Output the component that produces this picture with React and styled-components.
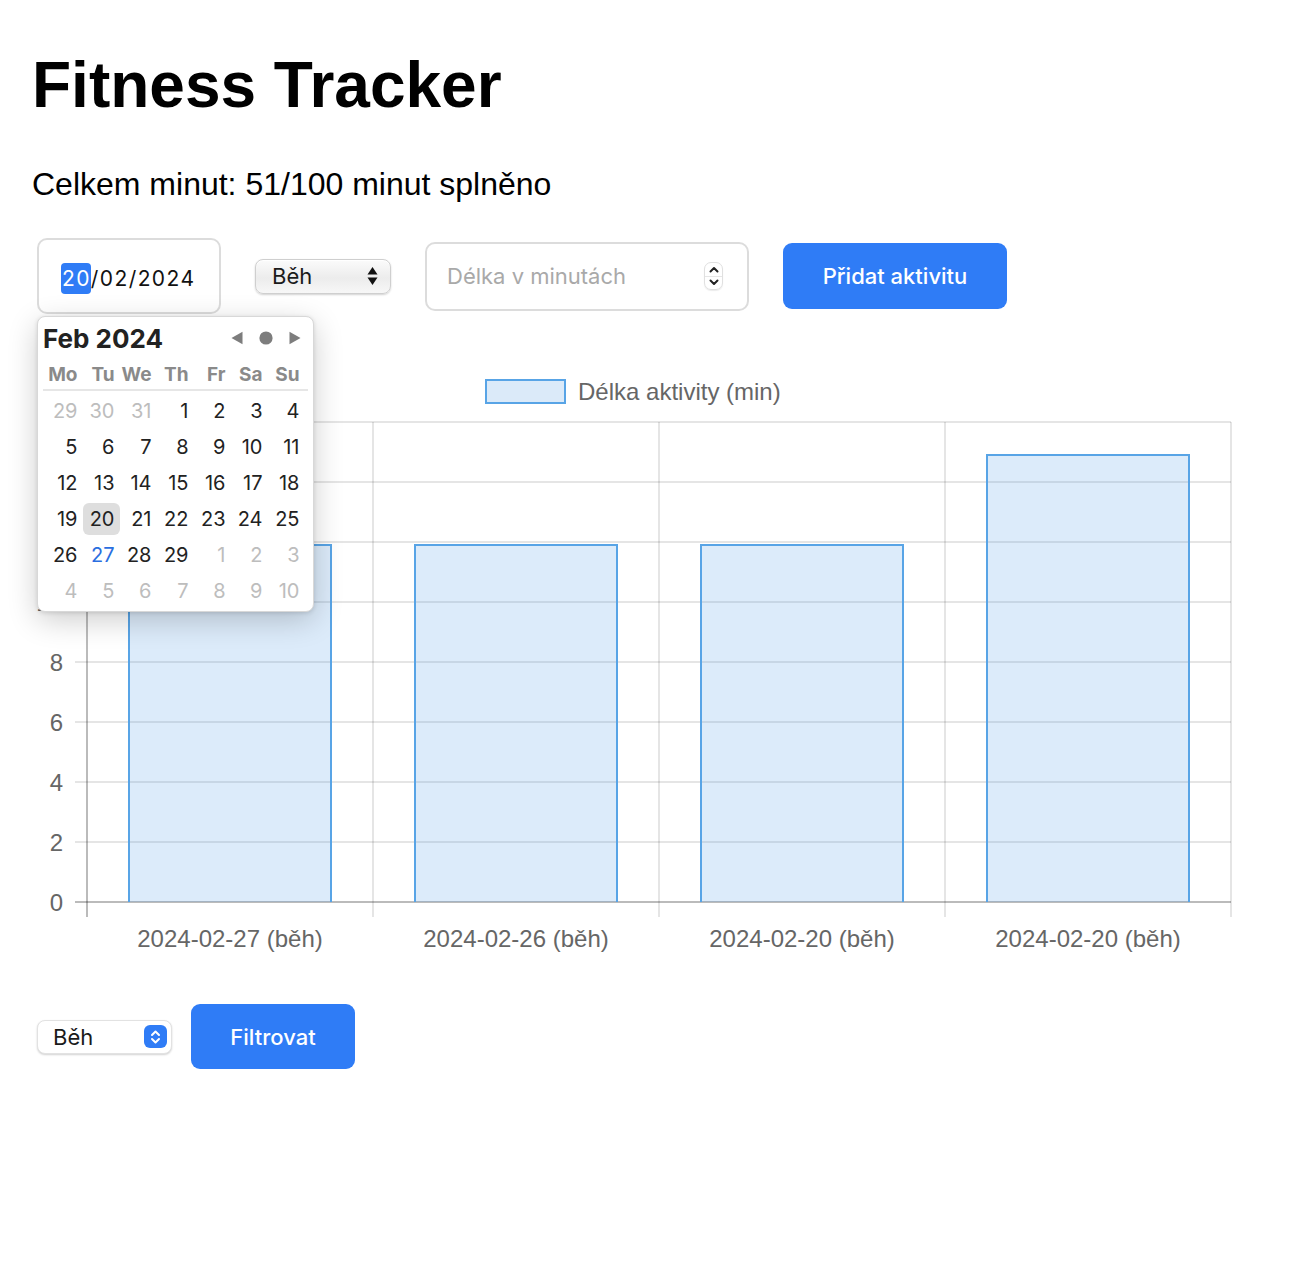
import React from "react";
import styled, { createGlobalStyle } from "styled-components";

const GlobalStyle = createGlobalStyle`
  body {
    margin: 0;
    background: #fff;
    font-family: "Liberation Sans", Arial, sans-serif;
    color: #000;
  }
`;

const BLUE = "#2f7cf6";
const UI_FONT = `Inter, "Noto Sans", "Liberation Sans", sans-serif`;

const Page = styled.div`
  padding: 0 32px 120px;
`;

const Title = styled.h1`
  margin: 49px 0 0;
  font-size: 64px;
  line-height: 72px;
  font-weight: bold;
`;

const Summary = styled.p`
  margin: 45px 0 0;
  font-size: 32px;
  line-height: 36px;
`;

const FormRow = styled.div`
  display: flex;
  align-items: center;
  gap: 34px;
  margin: 36px 0 0 5px;
`;

const DateWrap = styled.div`
  position: relative;
`;

const DateBox = styled.div`
  box-sizing: border-box;
  width: 184px;
  height: 76px;
  border: 2px solid #dcdcdc;
  border-radius: 10px;
  display: flex;
  align-items: center;
  padding: 4px 0 0 22px;
  font-family: ${UI_FONT};
  font-size: 21px;
  letter-spacing: 1.4px;
  color: #111;
`;

const Seg = styled.span`
  background: ${({ active }) => (active ? BLUE : "transparent")};
  color: ${({ active }) => (active ? "#fff" : "inherit")};
  border-radius: 4px;
  padding: 3px 0 3px 1px;
`;

const Select = styled.div`
  box-sizing: border-box;
  width: ${({ w }) => w}px;
  height: ${({ h }) => h}px;
  display: flex;
  align-items: center;
  justify-content: space-between;
  padding: 0 ${({ pr }) => pr}px 0 ${({ pl }) => pl}px;
  border-radius: 8px;
  border: 1px solid ${({ flat }) => (flat ? "#e2e2e2" : "#cfcfcf")};
  background: ${({ flat }) =>
    flat ? "#fff" : "linear-gradient(#fbfbfb 0%, #ececec 55%, #f7f7f7 100%)"};
  box-shadow: 0 1px 2px rgba(0, 0, 0, 0.18), inset 0 1px 0 #fff;
  font-family: ${UI_FONT};
  font-size: 22px;
  color: #1a1a1a;
`;

const BlueArrows = styled.span`
  width: 23px;
  height: 23px;
  border-radius: 6px;
  background: ${BLUE};
  display: flex;
  align-items: center;
  justify-content: center;
`;

const NumberBox = styled.div`
  box-sizing: border-box;
  width: 324px;
  height: 69px;
  border: 2px solid #dcdcdc;
  border-radius: 10px;
  display: flex;
  align-items: center;
  justify-content: space-between;
  padding: 0 24px 0 20px;
`;

const NumberInput = styled.input`
  border: 0;
  outline: none;
  background: transparent;
  width: 230px;
  padding: 0;
  font-family: ${UI_FONT};
  font-size: 22px;
  color: #111;
  &::placeholder {
    color: #a9a9a9;
  }
`;

const Spinner = styled.span`
  box-sizing: border-box;
  width: 19px;
  height: 28px;
  border-radius: 7px;
  border: 1px solid #e0e0e0;
  display: flex;
  flex-direction: column;
  box-shadow: 0 1px 1px rgba(0, 0, 0, 0.08);
`;

const SpinHalf = styled.span`
  flex: 1;
  display: flex;
  align-items: center;
  justify-content: center;
  border-top: ${({ lower }) => (lower ? "1px solid #e6e6e6" : "0")};
`;

const Button = styled.button`
  box-sizing: border-box;
  width: ${({ w }) => w}px;
  height: ${({ h }) => h}px;
  border: 0;
  border-radius: 9px;
  background: ${BLUE};
  color: #fff;
  font-family: ${UI_FONT};
  font-size: 22px;
  font-weight: 500;
  padding: 0;
  cursor: pointer;
`;

const Popup = styled.div`
  position: absolute;
  top: 78px;
  left: 0;
  z-index: 5;
  box-sizing: border-box;
  width: 277px;
  height: 296px;
  background: #fff;
  border-radius: 8px;
  border: 1px solid #d8d8d8;
  box-shadow: 0 8px 30px rgba(0, 0, 0, 0.2), 0 1px 4px rgba(0, 0, 0, 0.12);
  padding: 4px 9px 0 5px;
  font-family: ${UI_FONT};
`;

const PopHead = styled.div`
  display: flex;
  align-items: center;
  justify-content: space-between;
  height: 34px;
`;

const Month = styled.div`
  font-size: 26px;
  font-weight: 700;
  color: #222;
`;

const Nav = styled.div`
  display: flex;
  align-items: center;
  gap: 16px;
  padding-right: 3px;
`;

const DayGrid = styled.div`
  display: grid;
  grid-template-columns: repeat(7, 37px);
  grid-auto-rows: 32px;
  row-gap: 4px;
  margin-left: 2.5px;
`;

const HeadGrid = styled(DayGrid)`
  grid-auto-rows: 28px;
  margin-top: 6px;
  border-bottom: 2px solid #e6e6e6;
  margin-right: -4px;
  margin-left: 0;
  padding-left: 2.5px;
  margin-bottom: 4px;
`;

const DayName = styled.div`
  text-align: right;
  padding-right: 5px;
  font-size: 19px;
  font-weight: 700;
  color: #8a8a8a;
  line-height: 28px;
`;

const Day = styled.div`
  text-align: right;
  padding-right: 5px;
  line-height: 32px;
  font-size: 20px;
  border-radius: 6px;
  color: ${({ kind }) =>
    kind === "other" ? "#bdbdbd" : kind === "today" ? "#2a6ee0" : "#222"};
  background: ${({ kind }) => (kind === "sel" ? "#dedede" : "transparent")};
`;

const ChartSvg = styled.svg`
  display: block;
  margin-top: 46px;
`;

const FilterRow = styled.div`
  display: flex;
  align-items: center;
  gap: 19px;
  margin: 34px 0 0 5px;
`;

const Chevrons = ({ color = "#fff" }) => (
  <svg width="11" height="16" viewBox="0 0 11 16">
    <path d="M2 6 L5.5 2.5 L9 6" fill="none" stroke={color} strokeWidth="2" strokeLinecap="round" strokeLinejoin="round" />
    <path d="M2 10 L5.5 13.5 L9 10" fill="none" stroke={color} strokeWidth="2" strokeLinecap="round" strokeLinejoin="round" />
  </svg>
);

const Chevron = ({ down }) => (
  <svg width="10" height="7" viewBox="0 0 10 7">
    <path
      d={down ? "M1.5 1.5 L5 5 L8.5 1.5" : "M1.5 5.5 L5 2 L8.5 5.5"}
      fill="none"
      stroke="#222"
      strokeWidth="2"
      strokeLinecap="round"
      strokeLinejoin="round"
    />
  </svg>
);

const Triangles = () => (
  <svg width="11" height="20" viewBox="0 0 11 20">
    <path d="M5.5 1 L10.5 8.5 L0.5 8.5 Z" fill="#111" />
    <path d="M5.5 19 L10.5 11.5 L0.5 11.5 Z" fill="#111" />
  </svg>
);

const weeks = [
  [[29, "other"], [30, "other"], [31, "other"], [1], [2], [3], [4]],
  [[5], [6], [7], [8], [9], [10], [11]],
  [[12], [13], [14], [15], [16], [17], [18]],
  [[19], [20, "sel"], [21], [22], [23], [24], [25]],
  [[26], [27, "today"], [28], [29], [1, "other"], [2, "other"], [3, "other"]],
  [[4, "other"], [5, "other"], [6, "other"], [7, "other"], [8, "other"], [9, "other"], [10, "other"]],
];

const Calendar = () => (
  <Popup>
    <PopHead>
      <Month>Feb 2024</Month>
      <Nav>
        <svg width="12" height="14" viewBox="0 0 12 14">
          <path d="M0.5 7 L11.5 0.8 L11.5 13.2 Z" fill="#7d7d7d" />
        </svg>
        <svg width="14" height="14" viewBox="0 0 14 14">
          <circle cx="7" cy="7" r="6.6" fill="#7d7d7d" />
        </svg>
        <svg width="12" height="14" viewBox="0 0 12 14">
          <path d="M11.5 7 L0.5 0.8 L0.5 13.2 Z" fill="#7d7d7d" />
        </svg>
      </Nav>
    </PopHead>
    <HeadGrid>
      {["Mo", "Tu", "We", "Th", "Fr", "Sa", "Su"].map((d) => (
        <DayName key={d}>{d}</DayName>
      ))}
    </HeadGrid>
    <DayGrid>
      {weeks.flat().map(([n, kind], i) => (
        <Day key={i} kind={kind}>
          {n}
        </Day>
      ))}
    </DayGrid>
  </Popup>
);

const data = [
  { label: "2024-02-27 (běh)", value: 12 },
  { label: "2024-02-26 (běh)", value: 12 },
  { label: "2024-02-20 (běh)", value: 12 },
  { label: "2024-02-20 (běh)", value: 15 },
];

const Chart = () => {
  const left = 55;
  const right = 1199;
  const top = 62;
  const bottom = 542;
  const max = 16;
  const step = (right - left) / data.length;
  const y = (v) => bottom - (v / max) * (bottom - top);
  const ticks = [0, 2, 4, 6, 8, 10, 12, 14, 16];
  const grid = "rgba(0,0,0,0.1)";
  const font = `"Liberation Sans", Arial, sans-serif`;

  return (
    <ChartSvg width="1232" height="610" viewBox="0 0 1232 610">
      <rect x="454" y="20" width="79" height="23" fill="#dbeaf9" stroke="#58a4e6" strokeWidth="2" />
      <text x="546" y="39.5" fontFamily={font} fontSize="24" fill="#666">
        Délka aktivity (min)
      </text>

      {ticks.map((t) => (
        <g key={t}>
          <line x1={left - 12} x2={right} y1={y(t)} y2={y(t)} stroke={grid} strokeWidth="2" />
          <text x="31" y={y(t) + 8.5} textAnchor="end" fontFamily={font} fontSize="24" fill="#666">
            {t}
          </text>
        </g>
      ))}
      {data.map((_, i) => (
        <line
          key={i}
          x1={left + step * i}
          x2={left + step * i}
          y1={top}
          y2={bottom + 15}
          stroke={grid}
          strokeWidth="2"
        />
      ))}
      <line x1={right} x2={right} y1={top} y2={bottom + 15} stroke={grid} strokeWidth="2" />
      <line x1={left} x2={left} y1={top} y2={bottom + 15} stroke="rgba(0,0,0,0.18)" strokeWidth="2" />
      <line x1={left - 12} x2={right} y1={bottom} y2={bottom} stroke="rgba(0,0,0,0.18)" strokeWidth="2" />

      {data.map((d, i) => {
        const cx = left + step * (i + 0.5);
        const w = 204;
        const x0 = cx - w / 2;
        const y0 = y(d.value) + 2;
        return (
          <g key={i}>
            <rect x={x0} y={y0} width={w} height={bottom - y0} fill="rgba(70,150,228,0.19)" />
            <path
              d={`M${x0 + 1} ${bottom} L${x0 + 1} ${y0 + 1} L${x0 + w - 1} ${y0 + 1} L${x0 + w - 1} ${bottom}`}
              fill="none"
              stroke="#58a4e6"
              strokeWidth="2"
            />
            <text x={cx} y="586.5" textAnchor="middle" fontFamily={font} fontSize="24" fill="#666">
              {d.label}
            </text>
          </g>
        );
      })}
    </ChartSvg>
  );
};

export default function App() {
  return (
    <>
      <GlobalStyle />
      <Page>
        <Title>Fitness Tracker</Title>
        <Summary>Celkem minut: 51/100 minut splněno</Summary>

        <FormRow>
          <DateWrap>
            <DateBox>
              <Seg active>20</Seg>/02/2024
            </DateBox>
            <Calendar />
          </DateWrap>
          <Select w={136} h={35} pl={16} pr={12}>
            <span>Běh</span>
            <Triangles />
          </Select>
          <NumberBox>
            <NumberInput placeholder="Délka v minutách" />
            <Spinner>
              <SpinHalf>
                <Chevron />
              </SpinHalf>
              <SpinHalf lower>
                <Chevron down />
              </SpinHalf>
            </Spinner>
          </NumberBox>
          <Button w={224} h={66}>Přidat aktivitu</Button>
        </FormRow>

        <Chart />

        <FilterRow>
          <Select flat w={135} h={34} pl={15} pr={4}>
            <span>Běh</span>
            <BlueArrows>
              <Chevrons />
            </BlueArrows>
          </Select>
          <Button w={164} h={65}>Filtrovat</Button>
        </FilterRow>
      </Page>
    </>
  );
}
